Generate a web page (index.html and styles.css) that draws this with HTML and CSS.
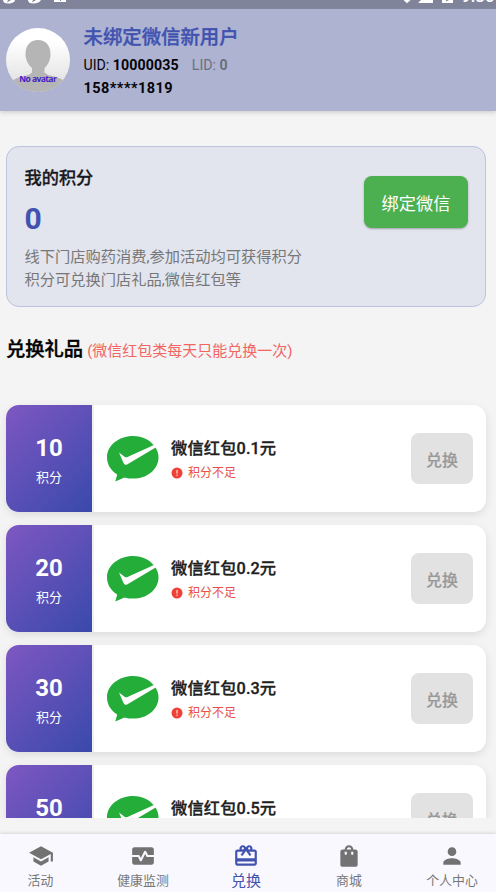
FILE: index.html
```html
<!DOCTYPE html>
<html lang="zh-CN">
<head>
<meta charset="utf-8">
<title>兑换</title>
<link rel="stylesheet" href="styles.css">
</head>
<body>
<svg class="defs" aria-hidden="true">
  <symbol id="bubble" viewBox="0 0 52 46">
    <path fill="#24ad38" d="M26 0C11.600 0 0 9.600 0 21.500c0 7 4 13.200 10.200 17.100L8.300 45.500l9.200-4.100c2.700.8 5.500 1.200 8.500 1.200 14.400 0 25.500-9.500 25.500-21.200 0-3.800-1.200-7.300-3.300-10.400C43.700 4.400 35.700 0 26 0z"/>
    <path fill="#fff" d="M12 16.500l5.500 4.300c1 .6 2 .7 3 .3L48 8.500l1.500 2.500-29 17.200c-1.800 1-3.200.6-4-1.100z"/>
  </symbol>
  <symbol id="alert" viewBox="0 0 12 12">
    <circle cx="6" cy="6" r="5.500" fill="#ee4138"/>
    <path fill="#fad7d5" d="M5.400 3h1.200v3.700H5.400zM5.400 7.800h1.200V9H5.400z"/>
  </symbol>
</svg>
<div class="app">
  <div class="status">
    <svg width="496" height="9" viewBox="0 0 496 9" fill="#fff">
      <path d="M3 0h12c0 2-3 3.500-7 3.500-3 0-5-1-5-3.500zM28 0h13c-1 2-4 3.500-8 3.500-3 0-5-1-5-3.500zM54 0h12v2H54zM403.500 0h7L407 3.200zM421 0h12v3H418zM442 0h11v3h-11z"/>
      <path fill="#80849a" d="M8 0h3L7 2.500zM33 0h3l-4 2.500zM60 0h1v1h-1zM446 0h3l-3 1.500z"/>
    </svg>
    <span class="clock">9:36</span>
  </div>
  <header class="profile">
    <svg class="avatar" viewBox="0 0 64 64">
      <defs>
        <clipPath id="round"><circle cx="32" cy="32" r="32"/></clipPath>
        <linearGradient id="shade" x1="0" y1="0" x2="0" y2="1"><stop offset="0.200" stop-color="#fff"/><stop offset="1" stop-color="#ddd"/></linearGradient>
      </defs>
      <g clip-path="url(#round)">
        <rect width="64" height="64" fill="url(#shade)"/>
        <path fill="#b5b5b5" d="M32 12c8 0 12.500 6 12.500 14 0 6-2.500 11-6 14v4.500c1.500 2 5 3 10 4 6 1.500 10 4 12 8V64H4v-7c2-5 6-7 12-8.500 5-1 8.500-2 10-4V40c-3.500-3-6.500-8-6.500-14 0-8 4.500-14 12.500-14z"/>
      </g>
      <text x="32" y="54" text-anchor="middle" textLength="37.500" class="avatar-text">No avatar</text>
    </svg>
    <div class="who">
      <div class="name">未绑定微信新用户</div>
      <div class="ids"><span>UID: <b>10000035</b></span><span class="lid">LID: <b>0</b></span></div>
      <div class="phone">158****1819</div>
    </div>
  </header>
  <main class="content">
    <section class="points">
      <div class="points-text">
        <h2>我的积分</h2>
        <div class="total">0</div>
        <p>线下门店购药消费,参加活动均可获得积分<br>积分可兑换门店礼品,微信红包等</p>
      </div>
      <button class="bind">绑定微信</button>
    </section>
    <div class="heading"><h1>兑换礼品</h1><span>(微信红包类每天只能兑换一次)</span></div>
    <div class="gifts">
      <article class="gift"><div class="cost"><b>10</b><span>积分</span></div><svg class="pic"><use href="#bubble"/></svg><div class="info"><h3>微信红包0.1元</h3><p><svg><use href="#alert"/></svg>积分不足</p></div><button class="redeem">兑换</button></article>
      <article class="gift"><div class="cost"><b>20</b><span>积分</span></div><svg class="pic"><use href="#bubble"/></svg><div class="info"><h3>微信红包0.2元</h3><p><svg><use href="#alert"/></svg>积分不足</p></div><button class="redeem">兑换</button></article>
      <article class="gift"><div class="cost"><b>30</b><span>积分</span></div><svg class="pic"><use href="#bubble"/></svg><div class="info"><h3>微信红包0.3元</h3><p><svg><use href="#alert"/></svg>积分不足</p></div><button class="redeem">兑换</button></article>
      <article class="gift"><div class="cost"><b>50</b></div><svg class="pic"><use href="#bubble"/></svg><div class="info"><h3>微信红包0.5元</h3><p></p></div><button class="redeem">兑换</button></article>
    </div>
  </main>
  <nav class="tabs">
    <a class="tab"><svg viewBox="0 0 24 24"><path d="M5 13.180v4L12 21l7-3.820v-4L12 17l-7-3.820zM12 3L1 9l11 6 9-4.910V17h2V9L12 3z"/></svg><span>活动</span></a>
    <a class="tab"><svg viewBox="0 0 24 24"><path d="M15.110 12.450L14 10.240l-3.110 6.210c-.16.34-.51.55-.89.55s-.73-.21-.89-.55L7.380 13H2v5c0 1.100.9 2 2 2h16c1.100 0 2-.9 2-2v-5h-6c-.38 0-.73-.21-.89-.55zM20 4H4c-1.100 0-2 .9-2 2v5h6c.38 0 .73.21.89.55L10 13.760l3.110-6.210c.34-.68 1.450-.68 1.790 0L16.620 11H22V6c0-1.100-.9-2-2-2z"/></svg><span>健康监测</span></a>
    <a class="tab active"><svg viewBox="0 0 24 24"><path d="M20 6h-2.180c.11-.31.18-.65.18-1 0-1.660-1.340-3-3-3-1.050 0-1.960.54-2.500 1.350l-.5.67-.5-.68C10.960 2.540 10.050 2 9 2 7.340 2 6 3.340 6 5c0 .35.07.69.18 1H4c-1.110 0-1.990.89-1.990 2L2 19c0 1.110.89 2 2 2h16c1.110 0 2-.89 2-2V8c0-1.110-.89-2-2-2zm-5-2c.55 0 1 .45 1 1s-.45 1-1 1-1-.45-1-1 .45-1 1-1zM9 4c.55 0 1 .45 1 1s-.45 1-1 1-1-.45-1-1 .45-1 1-1zm11 15H4v-2h16v2zm0-5H4V8h5.080L7 10.830 8.620 12 11 8.760l1-1.360 1 1.360L15.380 12 17 10.830 14.920 8H20v6z"/></svg><span>兑换</span></a>
    <a class="tab"><svg viewBox="0 0 24 24"><path d="M18 6h-2c0-2.210-1.790-4-4-4S8 3.790 8 6H6c-1.100 0-2 .9-2 2v12c0 1.100.9 2 2 2h12c1.100 0 2-.9 2-2V8c0-1.100-.9-2-2-2zm-8 4c0 .55-.45 1-1 1s-1-.45-1-1V8h2v2zm2-6c1.100 0 2 .9 2 2h-4c0-1.100.9-2 2-2zm4 6c0 .55-.45 1-1 1s-1-.45-1-1V8h2v2z"/></svg><span>商城</span></a>
    <a class="tab"><svg viewBox="0 0 24 24"><path d="M12 12c2.210 0 4-1.790 4-4s-1.790-4-4-4-4 1.790-4 4 1.790 4 4 4zm0 2c-2.670 0-8 1.340-8 4v2h16v-2c0-2.660-5.330-4-8-4z"/></svg><span>个人中心</span></a>
  </nav>
</div>
</body>
</html>
```
FILE: styles.css
```css
* { box-sizing: border-box; }
body, h1, h2, h3, p { margin: 0; }
body { font-family: Roboto, "Noto Sans CJK SC", sans-serif; background: #f4f4f4; color: #050508; }
.defs { position: absolute; width: 0; height: 0; }
button { border: 0; padding: 0; font-family: inherit; }
.app { height: 892px; display: flex; flex-direction: column; overflow: hidden; }
.status { position: relative; height: 9px; flex: none; background: #80849a; overflow: hidden; }
.status svg { display: block; }
.clock { position: absolute; left: 461px; bottom: 3px; color: #fff; font-size: 17px; line-height: 20px; font-weight: 500; }
.profile { height: 102px; flex: none; display: flex; padding: 19px 6px 0; background: #aeb3d2; box-shadow: 0 1px 5px rgba(0,0,0,.2); }
.avatar { width: 64px; height: 64px; margin-right: 13.500px; }
.avatar-text { font: 700 8.500px "Open Sans", sans-serif; fill: #4620c8; }
.who { margin-top: -4px; white-space: nowrap; }
.name { font-size: 19.400px; line-height: 27px; font-weight: 500; color: #4152af; -webkit-text-stroke: .35px; }
.ids { display: flex; gap: 13px; font-size: 14.200px; line-height: 27px; margin-top: 1px; }
.lid { color: #6d6f7c; }
.phone { font-size: 14.500px; line-height: 20px; font-weight: 700; letter-spacing: .45px; }
.ids b { letter-spacing: .1px; }
.content { height: 707px; flex: none; padding: 35px 10px 0 6px; overflow: hidden; }
.points { height: 161px; border: 1px solid #bcc2df; border-radius: 13px; background: #e2e4ee; display: flex; justify-content: space-between; padding: 17px 17px 0 17.500px; }
.points h2 { font-size: 17.200px; line-height: 28px; font-weight: 500; color: #18181d; -webkit-text-stroke: .3px; }
.total { font-size: 30px; line-height: 36px; font-weight: 700; color: #4152af; margin-top: 9px; }
.points p { font-size: 15.250px; line-height: 23px; color: #777; margin-top: 9px; }
.bind { width: 104px; height: 52px; margin-top: 12px; border-radius: 8px; background: #4caf50; color: #fff; font-size: 17.200px; box-shadow: 0 1px 2px rgba(0,0,0,.3); }
.heading { height: 98px; padding-top: 28px; display: flex; align-items: baseline; gap: 4px; line-height: 30px; white-space: nowrap; }
.heading h1 { font-size: 19.300px; font-weight: 500; color: #000; -webkit-text-stroke: .4px; }
.heading span { font-size: 15px; color: #f26564; }
.gifts { display: flex; flex-direction: column; gap: 13px; }
.gift { height: 107px; flex: none; display: flex; align-items: center; padding-right: 13px; border-radius: 13px; background: #fff; box-shadow: 0 3px 10px rgba(0,0,0,.1); }
.cost { width: 86px; height: 107px; border-radius: 13px 0 0 13px; background: linear-gradient(135deg, #7e57c2, #3949ab); color: #fff; display: flex; flex-direction: column; align-items: center; padding-top: 27px; box-shadow: 2px 0 0 #f0f0f3; }
.cost b { font-size: 24px; line-height: 32px; }
.cost span { font-size: 13px; line-height: 20px; margin-top: 4px; }
.pic { width: 52px; height: 46px; margin-left: 15px; }
.info { flex: 1; margin-left: 12px; padding-top: 2px; white-space: nowrap; }
.info h3 { font-size: 16.300px; line-height: 25px; font-weight: 500; color: #202020; letter-spacing: .1px; -webkit-text-stroke: .3px; }
.info p { display: flex; align-items: center; gap: 5px; height: 20px; font-size: 12px; line-height: 20px; color: #e65048; margin-top: 2px; }
.info p svg { width: 12px; height: 12px; }
.redeem { width: 62px; height: 51px; border-radius: 8px; background: #e2e2e2; color: #999; font-size: 16px; font-weight: 500; -webkit-text-stroke: .2px; }
.tabs { height: 58px; margin-top: auto; display: grid; grid-template-columns: 81px 124px 82px 124px 82px; background: #faf8ff; box-shadow: 0 -1px 3px rgba(0,0,0,.12); }
.tab { display: flex; flex-direction: column; align-items: center; padding-top: 9px; color: #777; font-size: 12.900px; line-height: 20px; white-space: nowrap; }
.tab svg { width: 26px; height: 26px; fill: #727272; }
.tab span { margin-top: 2px; }
.tab.active { color: #4152af; font-size: 15px; }
.tab.active svg { fill: #4152af; }
```
